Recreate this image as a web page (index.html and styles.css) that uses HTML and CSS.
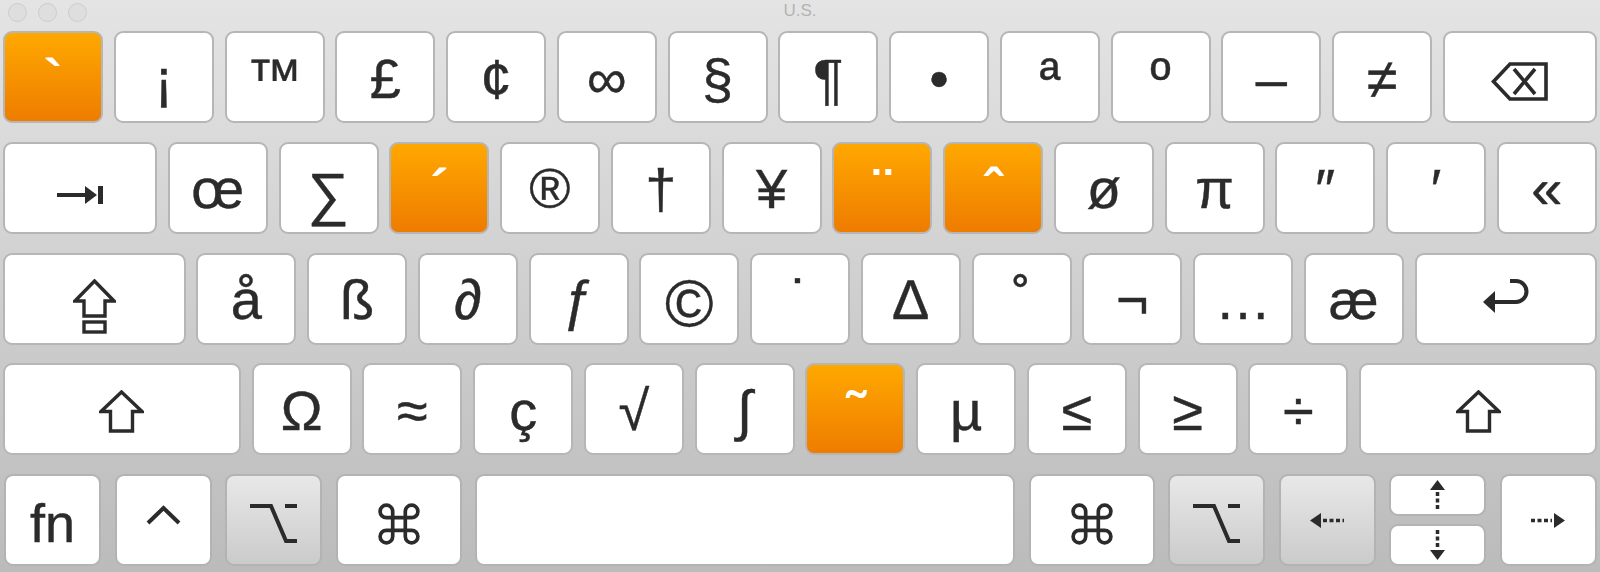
FILE: index.html
```html
<!DOCTYPE html>
<html lang="en">
<head>
  <meta charset="UTF-8" />
  <title>U.S.</title>
  <link rel="stylesheet" href="styles.css">
</head>
<body>
  <!-- Window title bar -->
  <div class="titlebar">
    <div class="lights">
      <span class="light"></span>
      <span class="light"></span>
      <span class="light"></span>
    </div>
    <div class="title">U.S.</div>
  </div>

  <!-- Keyboard viewer -->
  <div class="keyboard">
    <div class="row">
      <div class="key dead">`</div>
      <div class="key">¡</div>
      <div class="key">™</div>
      <div class="key">£</div>
      <div class="key">¢</div>
      <div class="key">∞</div>
      <div class="key">§</div>
      <div class="key">¶</div>
      <div class="key">•</div>
      <div class="key">ª</div>
      <div class="key">º</div>
      <div class="key">–</div>
      <div class="key">≠</div>
      <div class="key icon w-back">
        <svg class="ic-back" width="57" height="39" viewBox="0 0 57 39" fill="none" stroke="currentColor" stroke-width="3.6">
          <polygon points="19,2 55,2 55,37 19,37 2.5,19.5" stroke-linejoin="miter"/>
          <path d="M23 7 L44 32 M44 7 L23 32"/>
        </svg>
      </div>
    </div>

    <div class="row">
      <div class="key icon w-tab">
        <svg class="ic-tab" width="46" height="20" viewBox="0 0 46 20" fill="currentColor">
          <path d="M0 10 H30" stroke="currentColor" stroke-width="4"/>
          <polygon points="28,1 40,10 28,19"/>
          <rect x="41" y="1" width="5" height="18"/>
        </svg>
      </div>
      <div class="key">œ</div>
      <div class="key sum">∑</div>
      <div class="key dead">´</div>
      <div class="key">®</div>
      <div class="key">†</div>
      <div class="key">¥</div>
      <div class="key dead">¨</div>
      <div class="key dead">ˆ</div>
      <div class="key">ø</div>
      <div class="key">π</div>
      <div class="key">″</div>
      <div class="key">′</div>
      <div class="key">«</div>
    </div>

    <div class="row">
      <div class="key icon w-caps">
        <svg class="ic-caps" width="43" height="55" viewBox="0 0 43 55" fill="none" stroke="currentColor" stroke-width="3.4">
          <polygon points="21.5,2 41,22 32,22 32,37 11,37 11,22 2,22"/>
          <rect x="11" y="43" width="21" height="10"/>
        </svg>
      </div>
      <div class="key">å</div>
      <div class="key">ß</div>
      <div class="key">∂</div>
      <div class="key">ƒ</div>
      <div class="key copy">©</div>
      <div class="key">˙</div>
      <div class="key">∆</div>
      <div class="key">˚</div>
      <div class="key">¬</div>
      <div class="key">…</div>
      <div class="key">æ</div>
      <div class="key icon w-return">
        <svg class="ic-return" width="48" height="37" viewBox="0 0 48 37" fill="none" stroke="currentColor" stroke-width="4">
          <polygon points="1,24 13,13 13,35" fill="currentColor" stroke="none"/>
          <path d="M12 24 H34 A10.5 10.5 0 0 0 34 3 H28"/>
        </svg>
      </div>
    </div>

    <div class="row">
      <div class="key icon w-shift">
        <svg class="ic-shift" width="45" height="43" viewBox="0 0 45 43" fill="none" stroke="currentColor" stroke-width="3.4">
          <polygon points="22.5,2 43,21.5 33.5,21.5 33.5,41 11.5,41 11.5,21.5 2,21.5"/>
        </svg>
      </div>
      <div class="key">Ω</div>
      <div class="key">≈</div>
      <div class="key">ç</div>
      <div class="key">√</div>
      <div class="key">∫</div>
      <div class="key dead">˜</div>
      <div class="key">µ</div>
      <div class="key">≤</div>
      <div class="key">≥</div>
      <div class="key">÷</div>
      <div class="key icon w-shift">
        <svg class="ic-shift" width="45" height="43" viewBox="0 0 45 43" fill="none" stroke="currentColor" stroke-width="3.4">
          <polygon points="22.5,2 43,21.5 33.5,21.5 33.5,41 11.5,41 11.5,21.5 2,21.5"/>
        </svg>
      </div>
    </div>

    <div class="row row-bottom">
      <div class="key w-mod fn">fn</div>
      <div class="key icon w-mod">
        <svg class="ic-ctrl" width="35" height="21" viewBox="0 0 35 21" fill="none" stroke="currentColor" stroke-width="4">
          <polyline points="2,19 17.5,4 33,19"/>
        </svg>
      </div>
      <div class="key icon w-mod mod">
        <svg class="ic-opt" width="47" height="39" viewBox="0 0 47 39" fill="none" stroke="currentColor" stroke-width="4">
          <path d="M0 2 H21 L36 37 H47 M35 2 H47"/>
        </svg>
      </div>
      <div class="key icon w-cmd">
        <svg class="ic-cmd" width="42" height="42" viewBox="2 2 20 20" fill="none" stroke="currentColor" stroke-width="1.75">
          <path d="M15 6v12a3 3 0 1 0 3-3H6a3 3 0 1 0 3 3V6a3 3 0 1 0-3 3h12a3 3 0 1 0-3-3"/>
        </svg>
      </div>
      <div class="key w-space"></div>
      <div class="key icon w-cmd">
        <svg class="ic-cmd" width="42" height="42" viewBox="2 2 20 20" fill="none" stroke="currentColor" stroke-width="1.75">
          <path d="M15 6v12a3 3 0 1 0 3-3H6a3 3 0 1 0 3 3V6a3 3 0 1 0-3 3h12a3 3 0 1 0-3-3"/>
        </svg>
      </div>
      <div class="key icon w-mod mod">
        <svg class="ic-opt" width="47" height="39" viewBox="0 0 47 39" fill="none" stroke="currentColor" stroke-width="4">
          <path d="M0 2 H21 L36 37 H47 M35 2 H47"/>
        </svg>
      </div>
      <div class="key icon w-mod mod">
        <svg width="34" height="15" viewBox="0 0 34 15" fill="currentColor">
          <polygon points="0,7.5 11,0 11,15"/>
          <path d="M13 7.5 H34" stroke="currentColor" stroke-width="3.5" stroke-dasharray="4 2.5"/>
        </svg>
      </div>
      <div class="key-pair">
        <div class="key icon half">
          <svg width="15" height="30" viewBox="0 0 15 30" fill="currentColor">
            <polygon points="7.5,0 15,10 0,10"/>
            <path d="M7.5 12 V30" stroke="currentColor" stroke-width="3.5" stroke-dasharray="4 2.5"/>
          </svg>
        </div>
        <div class="key icon half">
          <svg width="15" height="30" viewBox="0 0 15 30" fill="currentColor">
            <path d="M7.5 0 V18" stroke="currentColor" stroke-width="3.5" stroke-dasharray="4 2.5"/>
            <polygon points="7.5,30 15,20 0,20"/>
          </svg>
        </div>
      </div>
      <div class="key icon w-mod">
        <svg width="34" height="15" viewBox="0 0 34 15" fill="currentColor">
          <path d="M0 7.5 H21" stroke="currentColor" stroke-width="3.5" stroke-dasharray="4 2.5"/>
          <polygon points="34,7.5 23,0 23,15"/>
        </svg>
      </div>
    </div>
  </div>
</body>
</html>
```

FILE: styles.css
```css
* {
  margin: 0;
  padding: 0;
  box-sizing: border-box;
}

html, body {
  height: 100%;
  overflow: hidden;
}

body {
  background: linear-gradient(#e4e4e4, #bbbbbb);
  font-family: 'Liberation Sans', 'DejaVu Sans', sans-serif;
  color: #2b2b2b;
}

/* Title bar */
.titlebar {
  display: grid;
  grid-template-columns: 1fr auto 1fr;
  height: 31px;
}

.lights {
  display: flex;
  align-items: flex-start;
  gap: 11px;
  padding: 3px 0 0 7.5px;
}

.light {
  width: 19px;
  height: 19px;
  border-radius: 50%;
  background: #dedede;
  border: 1px solid #cdcdcd;
}

.title {
  font-size: 17px;
  line-height: 22px;
  color: #b3b3b3;
}

/* Keyboard */
.keyboard {
  display: flex;
  flex-direction: column;
  gap: 18.75px;
  padding: 0 3px;
}

.row {
  display: flex;
  gap: 10.75px;
  height: 92px;
}

.key {
  flex: none;
  width: 100px;
  height: 92px;
  border: 2px solid #b6b6b6;
  border-radius: 9px;
  background: #fff;
  display: flex;
  justify-content: center;
  align-items: flex-start;
  padding-top: 17.5px;
  font-size: 56px;
  line-height: 56px;
  -webkit-text-stroke: 0.4px #2b2b2b;
}

.key.icon {
  align-items: center;
  padding-top: 0;
}

.key.dead {
  background: linear-gradient(#ffa800, #ee7c00);
  color: #fff;
  font-weight: bold;
  -webkit-text-stroke: 0;
}

.key.mod {
  background: linear-gradient(#e8e8e8, #cbcbcb);
  border-color: #bdbdbd;
}

.key.sum {
  padding-top: 22px;
  font-size: 58px;
}

.key.copy {
  padding-top: 20px;
  font-size: 66px;
}

.w-back,
.w-tab {
  width: 154px;
}

.w-caps,
.w-return {
  width: 182.5px;
}

.w-shift {
  width: 237.9px;
}

/* Bottom row */
.row-bottom {
  gap: 13.5px;
  padding-left: 1px;
}

.row-bottom .key {
  border-color: #b3b3b3;
}

.w-mod {
  width: 97px;
}

.w-cmd {
  width: 126px;
}

.w-space {
  width: 540px;
}

.fn {
  padding-top: 19px;
  font-size: 54px;
}

.key-pair {
  flex: none;
  width: 97px;
  display: flex;
  flex-direction: column;
  gap: 8px;
}

.key.half {
  width: auto;
  height: 42px;
}

/* Icon nudges */
.ic-back {
  margin-top: 8px;
}

.ic-tab {
  margin-top: 15px;
}

.ic-caps {
  margin-top: 16px;
}

.ic-shift {
  margin-top: 5px;
}

.ic-return {
  margin-top: -4px;
}

.ic-ctrl {
  margin-top: -12px;
}

.ic-opt {
  margin-top: 6px;
}

.ic-cmd {
  margin-top: 7px;
}
```
